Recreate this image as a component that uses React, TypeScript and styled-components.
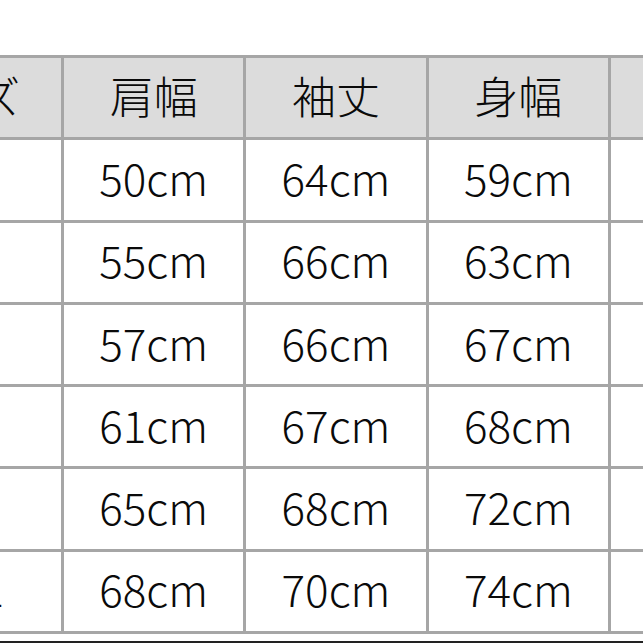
import React from "react";
import styled, { createGlobalStyle } from "styled-components";

const GlobalStyle = createGlobalStyle`
  html, body {
    margin: 0;
    padding: 0;
    background: #ffffff;
  }
`;

const COLUMNS = ["サイズ", "肩幅", "袖丈", "身幅", "着丈"];

const ROWS = [
  ["XS", "50cm", "64cm", "59cm", "68cm"],
  ["S", "55cm", "66cm", "63cm", "70cm"],
  ["M", "57cm", "66cm", "67cm", "72cm"],
  ["L", "61cm", "67cm", "68cm", "74cm"],
  ["XL", "65cm", "68cm", "72cm", "76cm"],
  ["XXXL", "68cm", "70cm", "74cm", "78cm"],
];

const LINE = "#a6a6a6";

const PageEl = styled.div`
  width: 643px;
  height: 643px;
  overflow: hidden;
  box-sizing: border-box;
  padding-top: 55px;
  font-family: "Noto Sans CJK JP", "Noto Sans", sans-serif;
  color: #111111;
`;

const GridEl = styled.div`
  display: grid;
  grid-template-columns: 212px repeat(4, 179.33px);
  grid-auto-rows: 79.3px;
  gap: 3px;
  width: max-content;
  margin-left: -154px;
  border: 3px solid ${LINE};
  background: ${LINE};
`;

const CellEl = styled.div<{ $head?: boolean }>`
  display: flex;
  align-items: center;
  justify-content: center;
  box-sizing: border-box;
  padding-bottom: 6px;
  background: ${(p) => (p.$head ? "#dcdcdc" : "#ffffff")};
  font-size: 44px;
  font-weight: 300;
  line-height: 1;
  letter-spacing: 0;
  color: #0a0a0a;
`;

const BottomRuleEl = styled.div`
  margin-top: 7px;
  height: 2px;
  background: #222222;
`;

export default function App() {
  return (
    <>
      <GlobalStyle />
      <PageEl>
        <GridEl>
          {COLUMNS.map((c) => (
            <CellEl key={c} $head>
              {c}
            </CellEl>
          ))}
          {ROWS.map((row) =>
            row.map((v, i) => <CellEl key={row[0] + i}>{v}</CellEl>)
          )}
        </GridEl>
        <BottomRuleEl />
      </PageEl>
    </>
  );
}
